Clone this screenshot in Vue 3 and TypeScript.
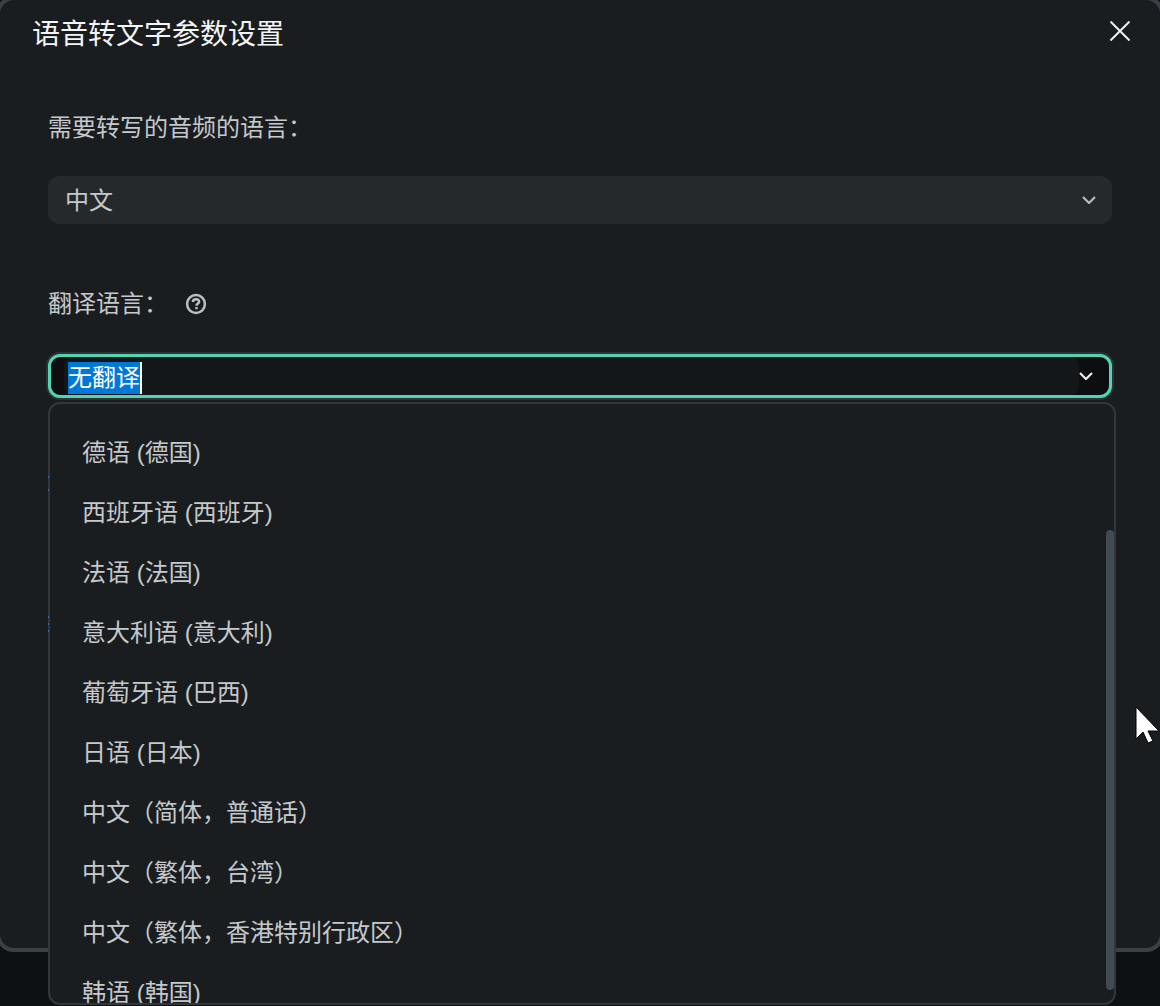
<script setup lang="ts">
// Speech-to-text settings dialog with the translation language menu open.
const languages: string[] = [
	"德语 (德国)",
	"西班牙语 (西班牙)",
	"法语 (法国)",
	"意大利语 (意大利)",
	"葡萄牙语 (巴西)",
	"日语 (日本)",
	"中文（简体，普通话）",
	"中文（繁体，台湾）",
	"中文（繁体，香港特别行政区）",
	"韩语 (韩国)",
];

// Bits of the form's blue links that peek out along the menu's left edge.
const specks: number[] = [122, 135, 262, 269, 276];
</script>

<template>
	<div class="page">
		<section class="dialog">
			<header class="dialog-head">
				<h1>语音转文字参数设置</h1>
				<button class="close" aria-label="关闭">
					<svg width="20" height="20" viewBox="0 0 20 20" aria-hidden="true">
						<path d="M0.5 0.5 L19.5 19.5 M19.5 0.5 L0.5 19.5" />
					</svg>
				</button>
			</header>

			<div class="form">
				<label class="label">需要转写的音频的语言：</label>
				<div class="select">
					<span class="select-value">中文</span>
					<svg class="chevron" width="14" height="8" viewBox="0 0 14 8" aria-hidden="true">
						<path d="M1 1 L7 7 L13 1" />
					</svg>
				</div>

				<label class="label label-help">
					<span>翻译语言：</span>
					<svg class="help" width="22" height="22" viewBox="0 0 22 22" aria-hidden="true">
						<circle cx="11" cy="11" r="8.9" />
						<path d="M7.9 9 C7.9 7.2 9.3 6.2 11 6.2 C12.8 6.2 14.1 7.2 14.1 8.8 C14.1 10.6 11.5 10.6 11.5 12.8" />
						<path d="M11.5 14 L11.5 16.2" />
					</svg>
				</label>
				<div class="field-wrap">
					<div class="field">
						<div class="field-inner">
							<span class="picked">无翻译</span><i class="caret"></i>
						</div>
						<svg class="chevron open" width="14" height="8" viewBox="0 0 14 8" aria-hidden="true">
							<path d="M1 1 L7 7 L13 1" />
						</svg>
					</div>

					<div class="menu">
						<ul>
							<li v-for="lang in languages" :key="lang">{{ lang }}</li>
						</ul>
						<div class="thumb"></div>
					</div>
					<i v-for="top in specks" :key="top" class="speck" :style="{ top: top + 'px' }"></i>
				</div>
			</div>
		</section>

		<svg class="pointer" width="26" height="39" viewBox="0 0 26 39" aria-hidden="true">
			<path d="M1 1 L1 33 L8 26 L13 37 L18 35 L13 25 L24 25 Z" />
		</svg>
	</div>
</template>

<style scoped>
.page {
	position: relative;
	width: 1160px;
	height: 1006px;
	overflow: hidden;
	background: #0e1114;
	font-family: "Liberation Sans", "Noto Sans CJK SC", sans-serif;
}

.dialog {
	box-sizing: border-box;
	width: 1168px;
	height: 956px;
	margin: -4px 0 0 -4px;
	border: 4px solid #3a4046;
	border-radius: 18px;
	background: #1a1d20;
}

.dialog-head {
	display: flex;
	align-items: center;
	justify-content: space-between;
	height: 40px;
	margin-top: 15px;
	padding: 0 30px 0 32px;
}

.dialog-head h1 {
	margin: 0;
	font-size: 28px;
	font-weight: 400;
	line-height: 40px;
	color: #f4f5f5;
}

.close {
	display: flex;
	margin-top: -8px;
	padding: 0;
	border: none;
	background: none;
}

.close path {
	fill: none;
	stroke: #f0f0f0;
	stroke-width: 2;
}

.form {
	display: flex;
	flex-direction: column;
	padding: 55px 48px 0;
}

.label {
	display: block;
	height: 36px;
	font-size: 24px;
	line-height: 36px;
	color: #c6c9cb;
}

.label-help {
	display: flex;
	align-items: center;
	gap: 5px;
	margin-top: 62px;
}

.help {
	margin-left: 12px;
}

.help circle,
.help path {
	fill: none;
	stroke: #bcbfc1;
	stroke-width: 2.5;
}

.select {
	display: flex;
	align-items: center;
	justify-content: space-between;
	box-sizing: border-box;
	height: 48px;
	margin-top: 30px;
	padding: 0 16px 0 17px;
	border-radius: 12px;
	background: #26292c;
	font-size: 24px;
	line-height: 36px;
	color: #c6c9cb;
}

.select-value {
	margin-top: 2px;
}

.chevron {
	flex: none;
}

.chevron path {
	fill: none;
	stroke: #b8babc;
	stroke-width: 2.2;
}

.chevron.open path {
	stroke: #eceded;
}

.field-wrap {
	position: relative;
	margin-top: 32px;
}

.field {
	display: flex;
	align-items: center;
	justify-content: space-between;
	box-sizing: border-box;
	height: 44px;
	padding: 0 16px 0 13px;
	border: 3px solid #52d4b4;
	border-radius: 12px;
	background: #0c0e10;
	box-shadow: 0 0 0 2px #2e3236;
}

.field-inner {
	display: flex;
	align-items: center;
	width: 1016px;
	height: 38px;
	padding: 4px 0 0 4px;
	box-sizing: border-box;
	border-radius: 8px;
	background: #14171a;
}

.picked {
	height: 32px;
	font-size: 24px;
	line-height: 32px;
	color: #ffffff;
	background: #0078d7;
}

.caret {
	width: 2px;
	height: 32px;
	background: #ffffff;
}

.menu {
	position: absolute;
	top: 48px;
	left: 0;
	box-sizing: border-box;
	width: 1068px;
	height: 603px;
	overflow: hidden;
	border: 2px solid #33373b;
	border-radius: 12px;
	background: #1a1d20;
}

.menu ul {
	margin: 0;
	padding: 19px 0 0 32px;
	list-style: none;
}

.menu li {
	height: 60px;
	font-size: 24px;
	line-height: 60px;
	white-space: nowrap;
	color: #c6c9cb;
}

.thumb {
	position: absolute;
	top: 126px;
	right: 0;
	width: 8px;
	height: 460px;
	border-radius: 4px;
	background: #424a52;
}

.speck {
	position: absolute;
	left: 0;
	width: 1px;
	height: 2px;
	background: #2a6fb0;
}

.pointer {
	position: absolute;
	top: 706px;
	left: 1135px;
}

.pointer path {
	fill: #ffffff;
	stroke: #000000;
	stroke-width: 1;
}
</style>

<style>
html,
body {
	margin: 0;
	overflow: hidden;
	background: #0e1114;
}
</style>
